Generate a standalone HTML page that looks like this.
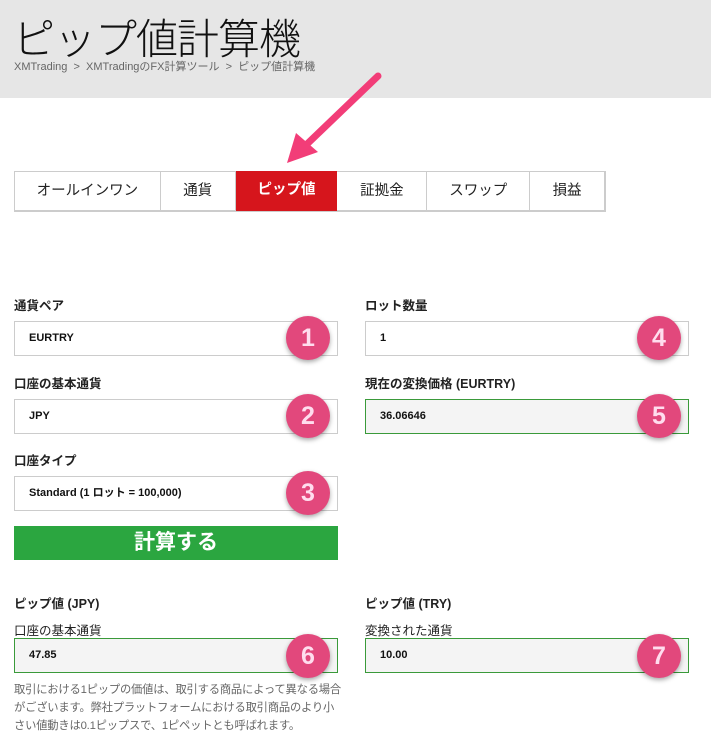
<!DOCTYPE html>
<html><head><meta charset="utf-8"><style>
body{margin:0;width:711px;height:744px;background:#fff;font-family:"Liberation Sans","Noto Sans CJK JP",sans-serif;position:relative;overflow:hidden;color:#222}
.hdr{position:absolute;left:0;top:0;width:711px;height:98px;background:#e6e6e6}
.t{position:absolute;left:13px;top:6px;font-size:42px;color:#111;font-weight:300;letter-spacing:-1px}
.bc{position:absolute;left:14px;top:58px;font-size:11px;color:#666}
.tabs{position:absolute;left:14px;top:171px;height:41px;width:592px;border:1px solid #ccc;border-bottom:2px solid #ccc;box-sizing:border-box;display:flex}
.tabs div{height:38px;line-height:38px;text-align:center;font-size:14.5px;border-right:1px solid #ccc;box-sizing:border-box;color:#222}
.tabs .on{background:#d6151c;color:#fff;font-weight:bold;border:none;height:40px;margin-top:-1px}
.lb{position:absolute;font-size:12.5px;font-weight:bold;color:#222}
.in{position:absolute;width:324px;height:35px;border:1px solid #ccc;box-sizing:border-box;font-size:11px;font-weight:bold;line-height:33px;padding-left:14px;color:#111}
.g{background:#f4f4f4;border-color:#3a9a3a}
.c{position:absolute;width:44px;height:44px;border-radius:50%;background:#e2487c;color:#fde;font-size:25px;font-weight:bold;text-align:center;line-height:44px;box-shadow:0 2px 5px rgba(0,0,0,.35)}
.btn{position:absolute;left:14px;top:526px;width:324px;height:34px;background:#2ba640;color:#fff;font-size:21px;font-weight:bold;text-align:center;line-height:34px}
.note{position:absolute;left:14px;top:681px;width:330px;font-size:11.3px;line-height:18px;color:#666;letter-spacing:-0.2px}
</style></head><body>
<div class="hdr"><div class="t">ピップ値計算機</div><div class="bc">XMTrading &nbsp;&gt;&nbsp; XMTradingのFX計算ツール &nbsp;&gt;&nbsp; ピップ値計算機</div></div>
<svg style="position:absolute;left:0;top:0" width="711" height="200"><line x1="378" y1="76" x2="305" y2="146" stroke="#f23d78" stroke-width="7" stroke-linecap="round"/><polygon points="287,163 296,133 318,152" fill="#f23d78"/></svg>
<div class="tabs"><div style="width:146px">オールインワン</div><div style="width:75px">通貨</div><div class="on" style="width:102px">ピップ値</div><div style="width:90px">証拠金</div><div style="width:103px">スワップ</div><div style="width:75px">損益</div></div>
<div class="lb" style="left:14px;top:295px">通貨ペア</div>
<div class="in" style="left:14px;top:321px">EURTRY</div>
<div class="lb" style="left:14px;top:373px">口座の基本通貨</div>
<div class="in" style="left:14px;top:399px">JPY</div>
<div class="lb" style="left:14px;top:450px">口座タイプ</div>
<div class="in" style="left:14px;top:476px">Standard (1 ロット = 100,000)</div>
<div class="btn">計算する</div>
<div class="lb" style="left:365px;top:295px">ロット数量</div>
<div class="in" style="left:365px;top:321px">1</div>
<div class="lb" style="left:365px;top:373px">現在の変換価格 (EURTRY)</div>
<div class="in g" style="left:365px;top:399px">36.06646</div>
<div class="lb" style="left:14px;top:593px">ピップ値 (JPY)</div>
<div class="lb" style="left:14px;top:620px;font-weight:normal">口座の基本通貨</div>
<div class="in g" style="left:14px;top:638px">47.85</div>
<div class="lb" style="left:365px;top:593px">ピップ値 (TRY)</div>
<div class="lb" style="left:365px;top:620px;font-weight:normal">変換された通貨</div>
<div class="in g" style="left:365px;top:638px">10.00</div>
<div class="note">取引における1ピップの価値は、取引する商品によって異なる場合がございます。弊社プラットフォームにおける取引商品のより小さい値動きは0.1ピップスで、1ピペットとも呼ばれます。</div>
<div class="c" style="left:286px;top:316px">1</div>
<div class="c" style="left:286px;top:394px">2</div>
<div class="c" style="left:286px;top:471px">3</div>
<div class="c" style="left:637px;top:316px">4</div>
<div class="c" style="left:637px;top:394px">5</div>
<div class="c" style="left:286px;top:634px">6</div>
<div class="c" style="left:637px;top:634px">7</div>
</body></html>
